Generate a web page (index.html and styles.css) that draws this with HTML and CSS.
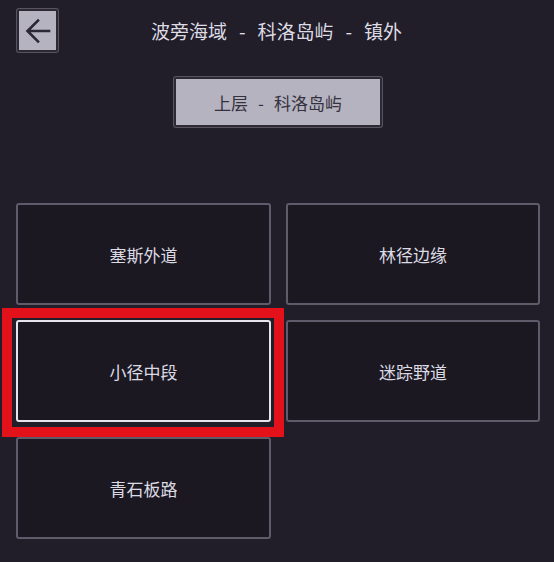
FILE: index.html
```html
<!DOCTYPE html>
<html lang="zh">
<head>
<meta charset="utf-8">
<link rel="stylesheet" href="styles.css">
</head>
<body>
<div class="page">
  <header class="header">
    <div class="back-cell">
      <button class="back-btn" aria-label="返回">
        <svg width="26" height="26" viewBox="0 0 26 26">
          <path d="M24 13 H3 M13 2.5 L2.5 13 L13 23.5" fill="none" stroke="#2b2833" stroke-width="2.6" stroke-linecap="square" stroke-linejoin="miter"/>
        </svg>
      </button>
    </div>
    <h1 class="title">波旁海域<span class="sep">-</span>科洛岛屿<span class="sep">-</span>镇外</h1>
    <div></div>
  </header>
  <div class="upper-row">
    <button class="upper-btn">上层<span class="sep-sm">-</span>科洛岛屿</button>
  </div>
  <div class="grid">
    <div class="card">塞斯外道</div>
    <div class="card">林径边缘</div>
    <div class="card card-active">小径中段<span class="highlight"></span></div>
    <div class="card">迷踪野道</div>
    <div class="card">青石板路</div>
  </div>
</div>
</body>
</html>
```

FILE: styles.css
```css
html, body {
  margin: 0;
  padding: 0;
  background: #211d29;
  width: 554px;
  height: 562px;
  overflow: hidden;
}
.page {
  font-family: "Noto Sans CJK SC", "Noto Sans", sans-serif;
  color: #dcdae3;
}
.header {
  display: grid;
  grid-template-columns: 1fr auto 1fr;
  align-items: center;
  height: 61px;
  padding: 9px 0 0 17px;
  box-sizing: border-box;
  align-items: start;
}
.back-btn {
  width: 41px;
  height: 43px;
  box-sizing: border-box;
  background: #b6b3c1;
  border: 2px solid #2c2935;
  box-shadow: 0 0 0 1px #57535f;
  border-radius: 2px;
  padding: 0;
  display: flex;
  align-items: center;
  justify-content: center;
}
.title {
  margin: 0;
  font-size: 19px;
  font-weight: 400;
  line-height: 43px;
  letter-spacing: 0;
  color: #dddbe4;
  white-space: nowrap;
  transform: translateX(-9px);
}
.sep {
  display: inline-block;
  margin: 0 12px;
}
.upper-row {
  display: flex;
  justify-content: center;
  padding: 16px 0 0 0;
  transform: translateX(1px);
}
.upper-btn {
  width: 208px;
  height: 50px;
  box-sizing: border-box;
  background: #b6b3c1;
  border: 2px solid #2d2a36;
  box-shadow: 0 0 0 1px #57535f;
  border-radius: 2px;
  font-family: "Noto Sans CJK SC", "Noto Sans", sans-serif;
  font-size: 17px;
  color: #34313d;
  padding: 0;
}
.sep-sm {
  display: inline-block;
  margin: 0 10px;
}
.grid {
  display: grid;
  grid-template-columns: 255px 254px;
  grid-auto-rows: 102px;
  column-gap: 15px;
  row-gap: 15px;
  padding: 76px 0 0 16px;
}
.card {
  position: relative;
  box-sizing: border-box;
  background: #1b1821;
  border: 2px solid #5e5b6a;
  border-radius: 3px;
  display: flex;
  align-items: center;
  justify-content: center;
  font-size: 17px;
  color: #dcdae3;
}
.card-active {
  border-color: #e6e5ec;
}
.highlight {
  position: absolute;
  top: -14px;
  left: -16px;
  right: -15px;
  bottom: -17px;
  border: 10px solid #e3121a;
  pointer-events: none;
}
```
